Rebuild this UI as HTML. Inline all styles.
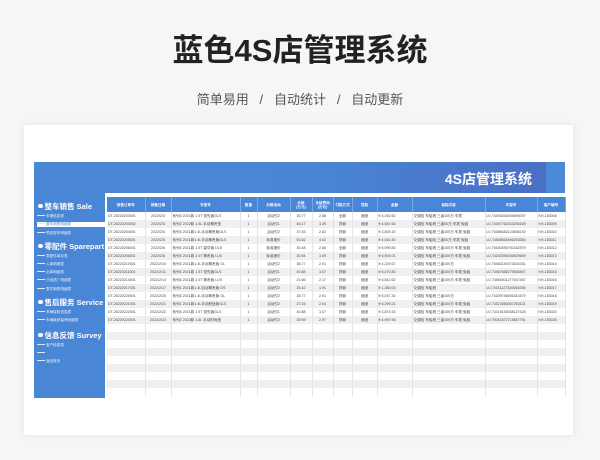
<!DOCTYPE html>
<html><head><meta charset="utf-8">
<style>
*{margin:0;padding:0;box-sizing:border-box}
body{width:600px;height:460px;background:#f5f6f8;position:relative;overflow:hidden;font-family:"Liberation Sans","Noto Sans CJK SC",sans-serif}
.t1{position:absolute;top:25px;left:0;width:600px;text-align:center;font-size:31px;font-weight:bold;color:#222}
.t2{position:absolute;top:89px;left:0;width:600px;text-align:center;font-size:13px;color:#555}
.card{position:absolute;left:24px;top:125px;width:549px;height:310px;background:#fff;box-shadow:0 0 8px rgba(0,0,0,.08)}
.blue{position:absolute;left:34px;top:162px;width:531px;height:236px;background:#4a86d6}
.hdr{position:absolute;left:34px;top:162px;width:512px;height:31px;background:linear-gradient(90deg,#4a88d6 0%,#4985d5 55%,#4a6fc4 100%)}
.hdr2{position:absolute;left:546px;top:162px;width:19px;height:31px;background:#4c8ad9}
.ttl{position:absolute;left:440px;top:169px;width:92px;text-align:right;color:#fff;font-size:14px;font-weight:bold}
.white{position:absolute;left:105px;top:193px;width:460px;height:205px;background:#fff}
table{position:absolute;left:107px;top:197px;border-collapse:collapse;table-layout:fixed;width:458px}
td,th{font-size:3.6px;height:8px;white-space:nowrap;overflow:hidden;border-right:1px solid #e2e6ec;color:#444;padding:0 1px}
th{background:#4a86d6;color:#fff;height:15px;border-right:1px solid #7aa6e2;text-align:center;font-weight:bold;white-space:normal;line-height:4px}
tr:nth-child(odd) td{background:#f0f0f0}
.c{text-align:center}
.side{position:absolute;left:34px;top:193px;width:71px;color:#fff}
.sec{position:absolute;left:4px;font-size:7.5px;font-weight:bold;white-space:nowrap}
.sec:before{content:"";display:inline-block;width:4.5px;height:4.5px;border-radius:50%;background:#fff;margin-right:2px;vertical-align:1px}
.it{position:absolute;left:3px;font-size:3.6px;white-space:nowrap;color:#e8f0fb}
.it:before{content:"";display:inline-block;width:8px;border-top:0.6px solid #dfe9f8;vertical-align:1px;margin-right:1px}
.sel{position:absolute;left:3px;top:29px;width:68px;height:5px;background:#fff}
</style></head><body>
<div class="t1">蓝色4S店管理系统</div>
<div class="t2">简单易用 &nbsp;&nbsp;/&nbsp;&nbsp; 自动统计 &nbsp;&nbsp;/&nbsp;&nbsp; 自动更新</div>
<div class="card"></div>
<div class="blue"></div>
<div class="hdr"></div><div class="hdr2"></div>
<div class="ttl">4S店管理系统</div>
<div class="white"></div>
<div class="side">
<div class="sec" style="top:8px">整车销售 Sale</div>
<div class="it" style="top:21px">车辆信息表</div>
<div class="sel"></div>
<div class="it" style="top:29px;color:#4a86d6">整车销售明细表</div>
<div class="it" style="top:38px">预定提车明细表</div>
<div class="sec" style="top:48px">零配件 Sparepart</div>
<div class="it" style="top:61px">零配件库存表</div>
<div class="it" style="top:69px">入库明细表</div>
<div class="it" style="top:77px">出库明细表</div>
<div class="it" style="top:85px">只品选厂明细表</div>
<div class="it" style="top:94px">零件销售明细表</div>
<div class="sec" style="top:104px">售后服务 Service</div>
<div class="it" style="top:117px">车辆保险信息表</div>
<div class="it" style="top:125px">车辆维修保养明细表</div>
<div class="sec" style="top:137px">信息反馈 Survey</div>
<div class="it" style="top:150px">客户信息表</div>
<div class="it" style="top:158px"></div>
<div class="it" style="top:166px">返回首页</div>
</div>
<table>
<colgroup><col style="width:38px"><col style="width:26px"><col style="width:69px"><col style="width:17px"><col style="width:33px"><col style="width:22px"><col style="width:21px"><col style="width:19px"><col style="width:25px"><col style="width:35px"><col style="width:73px"><col style="width:52px"><col style="width:28px"></colgroup>
<tr><th>销售订单号</th><th>销售日期</th><th>车型号</th><th>数量</th><th>分期活动</th><th>价格<br>(万元)</th><th>手续费用<br>(万元)</th><th>付款方式</th><th>贷款</th><th>金额</th><th>保险内容</th><th>车架号</th><th>客户编号</th></tr>
<tr><td>DT-20220203001</td><td class="c">2022/2/3</td><td>系列4 2021款 1.5T 领先版GLS</td><td class="c">1</td><td class="c">活动付2</td><td class="c">35.77</td><td class="c">2.68</td><td class="c">全款</td><td class="c">我团</td><td>¥ 3,392.60</td><td>交强险 车船税 三者100万 车损</td><td>LV-74493026494893097</td><td>KH-153008</td></tr>
<tr><td>DT-20220203002</td><td class="c">2022/2/3</td><td>系列2 2022款 1.5L 手动尊贵型</td><td class="c">1</td><td class="c">活动付1</td><td class="c">45.17</td><td class="c">3.39</td><td class="c">贷款</td><td class="c">我团</td><td>¥ 4,587.64</td><td>交强险 车船税 三者50万 车损 免赔</td><td>LV-74397762333206169</td><td>KH-153009</td></tr>
<tr><td>DT-20220204001</td><td class="c">2022/2/4</td><td>系列3 2021款1.4L手动尊贵版GLS</td><td class="c">1</td><td class="c">活动付2</td><td class="c">37.53</td><td class="c">2.82</td><td class="c">贷款</td><td class="c">我团</td><td>¥ 3,505.15</td><td>交强险 车船税 三者100万 车损 免赔</td><td>LV-75386082123656192</td><td>KH-153010</td></tr>
<tr><td>DT-20220205001</td><td class="c">2022/2/5</td><td>系列3 2021款1.4L手动尊贵版GLS</td><td class="c">1</td><td class="c">标准报价</td><td class="c">53.62</td><td class="c">4.02</td><td class="c">贷款</td><td class="c">我团</td><td>¥ 4,042.40</td><td>交强险 车船险 三者50万 车损 免赔</td><td>LV-74848534946203350</td><td>KH-153011</td></tr>
<tr><td>DT-20220206001</td><td class="c">2022/2/6</td><td>系列4 2021款 1.5T 豪华版 DLS</td><td class="c">1</td><td class="c">标准报价</td><td class="c">35.48</td><td class="c">2.66</td><td class="c">全款</td><td class="c">我团</td><td>¥ 5,999.83</td><td>交强险 车船税 三者100万 车损 免赔</td><td>LV-75180395700162979</td><td>KH-153012</td></tr>
<tr><td>DT-20220208001</td><td class="c">2022/2/8</td><td>系列4 2021款 2.0T 尊贵版 LUX</td><td class="c">1</td><td class="c">标准报价</td><td class="c">30.94</td><td class="c">3.09</td><td class="c">贷款</td><td class="c">我团</td><td>¥ 5,904.01</td><td>交强险 车船税 三者100万 车损 免赔</td><td>LV-74240395406529649</td><td>KH-153013</td></tr>
<tr><td>DT-20220210001</td><td class="c">2022/2/10</td><td>系列3 2021款1.4L手动尊贵版 GL</td><td class="c">1</td><td class="c">活动付2</td><td class="c">38.77</td><td class="c">2.91</td><td class="c">贷款</td><td class="c">我团</td><td>¥ 4,229.67</td><td>交强险 车船税 三者100万</td><td>LV-75483140373401031</td><td>KH-153014</td></tr>
<tr><td>DT-20220211001</td><td class="c">2022/2/11</td><td>系列4 2021款 1.5T 领先版GLS</td><td class="c">1</td><td class="c">活动付1</td><td class="c">40.88</td><td class="c">3.07</td><td class="c">贷款</td><td class="c">我团</td><td>¥ 5,470.83</td><td>交强险 车船税 三者100万 车损 免赔</td><td>LV-73467658279536947</td><td>KH-153015</td></tr>
<tr><td>DT-20220214001</td><td class="c">2022/2/14</td><td>系列4 2021款 2.0T 尊贵版 LUX</td><td class="c">1</td><td class="c">活动付2</td><td class="c">21.66</td><td class="c">2.17</td><td class="c">贷款</td><td class="c">我团</td><td>¥ 5,542.62</td><td>交强险 车船税 三者100万 车损 免赔</td><td>LV-73555401277647457</td><td>KH-153016</td></tr>
<tr><td>DT-20220217001</td><td class="c">2022/2/17</td><td>系列1 2021款1.4L自动尊贵版 GS</td><td class="c">1</td><td class="c">活动付2</td><td class="c">25.42</td><td class="c">1.91</td><td class="c">贷款</td><td class="c">我团</td><td>¥ 1,350.00</td><td>交强险 车船税</td><td>LV-74141127320081006</td><td>KH-153017</td></tr>
<tr><td>DT-20220220001</td><td class="c">2022/2/20</td><td>系列3 2021款1.4L手动尊贵版 GL</td><td class="c">1</td><td class="c">活动付2</td><td class="c">38.77</td><td class="c">2.91</td><td class="c">贷款</td><td class="c">我团</td><td>¥ 5,047.34</td><td>交强险 车船税 三者100万</td><td>LV-74209746091810470</td><td>KH-153018</td></tr>
<tr><td>DT-20220221001</td><td class="c">2022/2/21</td><td>系列1 2021款1.4L手动舒适版GLS</td><td class="c">1</td><td class="c">活动付2</td><td class="c">27.15</td><td class="c">2.04</td><td class="c">贷款</td><td class="c">我团</td><td>¥ 5,299.21</td><td>交强险 车船税 三者100万 车损 免赔</td><td>LV-73313060067253121</td><td>KH-153019</td></tr>
<tr><td>DT-20220222001</td><td class="c">2022/2/22</td><td>系列4 2021款 1.5T 领先版GLS</td><td class="c">1</td><td class="c">活动付1</td><td class="c">40.88</td><td class="c">3.07</td><td class="c">贷款</td><td class="c">我团</td><td>¥ 3,874.53</td><td>交强险 车船税 三者100万 车损 免赔</td><td>LV-73219153048127328</td><td>KH-153024</td></tr>
<tr><td>DT-20220223001</td><td class="c">2022/2/23</td><td>系列2 2022款 1.5L 手动时尚型</td><td class="c">1</td><td class="c">活动付2</td><td class="c">39.59</td><td class="c">2.97</td><td class="c">贷款</td><td class="c">我团</td><td>¥ 4,997.96</td><td>交强险 车船税 三者100万 车损 免赔</td><td>LV-75042472718557791</td><td>KH-153025</td></tr>
<tr><td></td><td></td><td></td><td></td><td></td><td></td><td></td><td></td><td></td><td></td><td></td><td></td><td></td></tr>
<tr><td></td><td></td><td></td><td></td><td></td><td></td><td></td><td></td><td></td><td></td><td></td><td></td><td></td></tr>
<tr><td></td><td></td><td></td><td></td><td></td><td></td><td></td><td></td><td></td><td></td><td></td><td></td><td></td></tr>
<tr><td></td><td></td><td></td><td></td><td></td><td></td><td></td><td></td><td></td><td></td><td></td><td></td><td></td></tr>
<tr><td></td><td></td><td></td><td></td><td></td><td></td><td></td><td></td><td></td><td></td><td></td><td></td><td></td></tr>
<tr><td></td><td></td><td></td><td></td><td></td><td></td><td></td><td></td><td></td><td></td><td></td><td></td><td></td></tr>
<tr><td></td><td></td><td></td><td></td><td></td><td></td><td></td><td></td><td></td><td></td><td></td><td></td><td></td></tr>
<tr><td></td><td></td><td></td><td></td><td></td><td></td><td></td><td></td><td></td><td></td><td></td><td></td><td></td></tr>
<tr><td></td><td></td><td></td><td></td><td></td><td></td><td></td><td></td><td></td><td></td><td></td><td></td><td></td></tr>
</table>
</body></html>
